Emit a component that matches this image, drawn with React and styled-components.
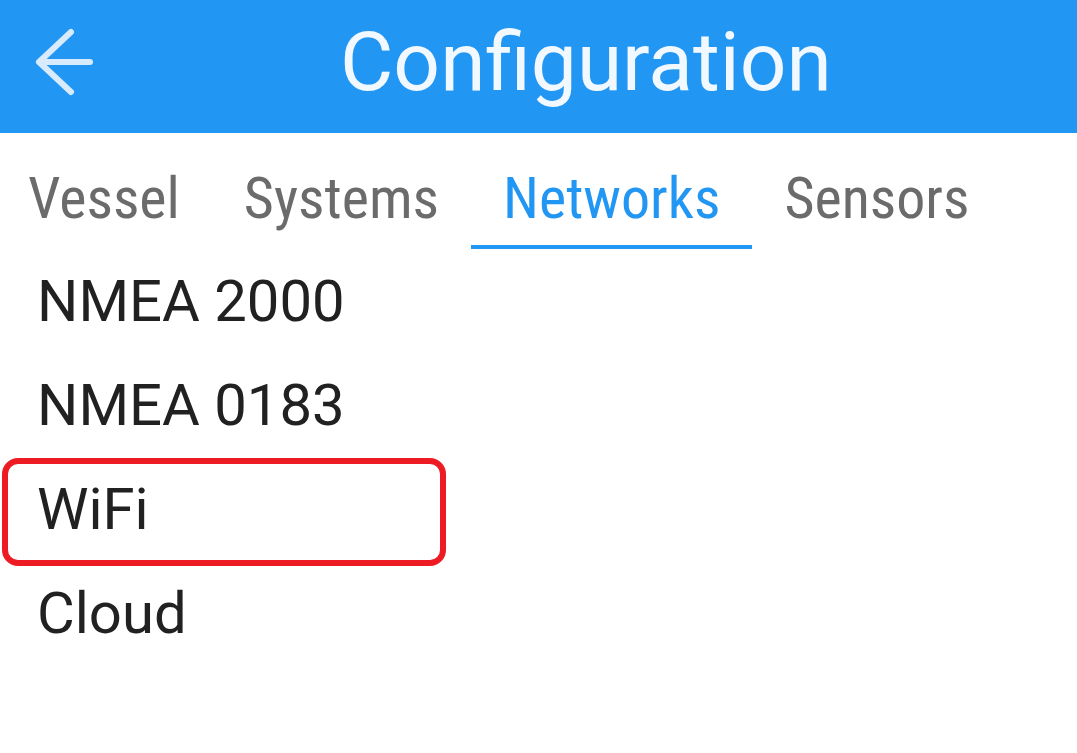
import styled, { createGlobalStyle } from 'styled-components';
import { useState } from 'react';

const GlobalStyle = createGlobalStyle`
  html, body {
    margin: 0;
    padding: 0;
    background: #ffffff;
    font-family: Roboto, "Noto Sans", sans-serif;
  }
`;

const Page = styled.div`
  width: 1077px;
  height: 753px;
  overflow: hidden;
  background: #ffffff;
`;

const AppBar = styled.header`
  height: 133px;
  box-sizing: border-box;
  padding: 0 0 10px 34px;
  background: #2196f3;
  display: flex;
  align-items: center;
`;

const BackButton = styled.button`
  width: 60px;
  height: 70px;
  padding: 0;
  border: none;
  background: transparent;
  display: flex;
  align-items: center;
  justify-content: center;
  cursor: pointer;
`;

const Title = styled.h1`
  margin: 0 0 0 246px;
  font-family: Roboto, sans-serif;
  font-weight: 400;
  font-size: 82px;
  line-height: 1;
  color: #f2f8ff;
`;

const Tabs = styled.nav`
  display: flex;
  height: 116px;
  margin-left: -4px;
`;

const Tab = styled.button`
  border: none;
  background: transparent;
  padding: 17px 32px 0;
  height: 116px;
  box-sizing: border-box;
  font-family: Roboto, sans-serif;
  font-stretch: condensed;
  font-size: 58px;
  line-height: 1;
  color: ${(p) => (p.$active ? '#2196f3' : '#6b6b6b')};
  border-bottom: 4px solid ${(p) => (p.$active ? '#2196f3' : 'transparent')};
  cursor: pointer;
`;

const List = styled.ul`
  list-style: none;
  margin: 0;
  padding: 0;
`;

const Item = styled.li`
  height: 104px;
  display: flex;
  align-items: center;
  padding-left: 37px;
  font-family: Roboto, sans-serif;
  font-size: 58px;
  color: #212121;
  cursor: pointer;
`;

const Highlight = styled.div`
  position: absolute;
  left: 2px;
  top: 458px;
  width: 444px;
  height: 108px;
  box-sizing: border-box;
  border: 6px solid #ed1c24;
  border-radius: 16px;
  pointer-events: none;
`;

const tabs = ['Vessel', 'Systems', 'Networks', 'Sensors'];
const items = ['NMEA 2000', 'NMEA 0183', 'WiFi', 'Cloud'];

const App = () => {
  const [active, setActive] = useState('Networks');
  return (
    <Page>
      <GlobalStyle />
      <AppBar>
        <BackButton>
          <svg width="60" height="70" viewBox="0 0 60 70" fill="none">
            <path
              d="M56 35H5M37 5L5 35L37 65"
              stroke="#d8ebfd"
              strokeWidth="6"
              strokeLinecap="round"
              strokeLinejoin="round"
            />
          </svg>
        </BackButton>
        <Title>Configuration</Title>
      </AppBar>
      <Tabs>
        {tabs.map((t) => (
          <Tab key={t} $active={t === active} onClick={() => setActive(t)}>
            {t}
          </Tab>
        ))}
      </Tabs>
      <List>
        {items.map((i) => (
          <Item key={i}>{i}</Item>
        ))}
      </List>
      <Highlight />
    </Page>
  );
};

export default App;
